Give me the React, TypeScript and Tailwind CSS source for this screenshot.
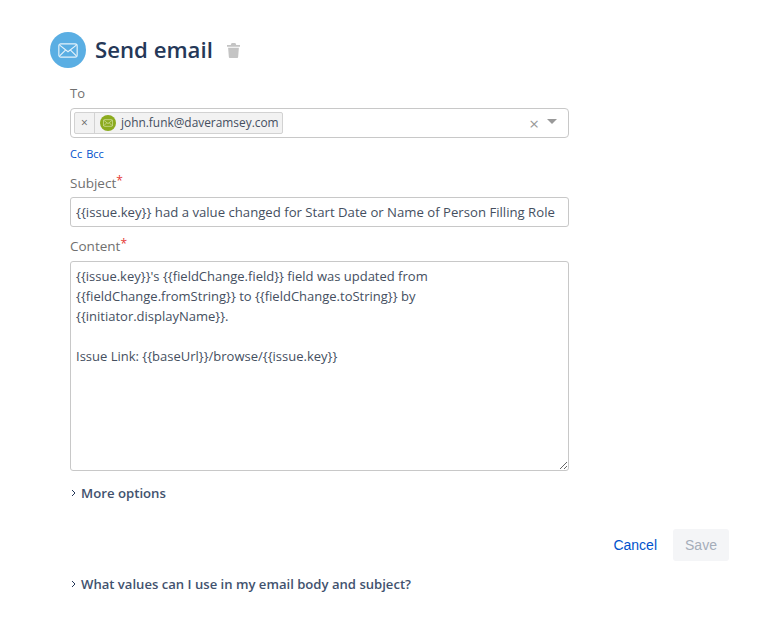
import React from 'react';

const font = "font-['Open_Sans','Noto_Sans',sans-serif]";

const MailIcon = ({ className }: { className?: string }) => (
  <svg viewBox="0 0 24 18" fill="none" stroke="currentColor" strokeWidth={1.4} className={className}>
    <rect x="1" y="1" width="22" height="16" rx="2.5" />
    <path d="M2 2.5l10 8 10-8M2 15.5l7-7M22 15.5l-7-7" />
  </svg>
);

const Chevron = () => (
  <svg viewBox="0 0 8 8" fill="none" stroke="#253858" strokeWidth={1} className="h-2 w-2">
    <path d="M2 1l3 3-3 3" />
  </svg>
);

const App: React.FC = () => {
  const body = `{{issue.key}}'s {{fieldChange.field}} field was updated from
{{fieldChange.fromString}} to {{fieldChange.toString}} by
{{initiator.displayName}}.

Issue Link: {{baseUrl}}/browse/{{issue.key}}`;

  return (
    <div className={`${font} h-[633px] w-[775px] bg-white pl-[50px] pt-8 text-[#454f5f]`}>
      {/* Title */}
      <div className="flex h-9 items-center">
        <div className="flex h-9 w-9 items-center justify-center rounded-full bg-[#5aaee3] text-[#e4f2fb]">
          <MailIcon className="h-[15px] w-5" />
        </div>
        <h1 className="ml-[9px] -mt-px text-[22.2px] font-semibold leading-9 text-[#253858]">Send email</h1>
        <svg viewBox="0 0 14 16" fill="#c4c4c4" className="ml-[14px] h-[15px] w-[13px]">
          <path d="M5 0h4l1 2h4v2H0V2h4zM1.2 5h11.6l-.8 10a1 1 0 01-1 1H3a1 1 0 01-1-1z" />
        </svg>
      </div>

      <div className="ml-5 w-[499px]">
        {/* To */}
        <label className="mt-4 block text-[13px] leading-[18px] text-[#707070]">To</label>
        <div className="mt-[6px] flex h-[30px] items-center rounded-[4px] border border-[#c8c8c8] pl-[3px] pr-[11px]">
          <div className="flex h-[22px] items-center rounded-[2px] border border-[#d2d2d2] bg-[#f2f2f2] text-[11.9px] text-[#454f5f]">
            <span className="flex h-full w-5 items-center justify-center border-r border-[#d2d2d2] text-[#666]">×</span>
            <span className="ml-[5px] flex h-4 w-4 items-center justify-center rounded-full bg-[#8cab1e] text-[#e6efc4]">
              <MailIcon className="h-2 w-[10px]" />
            </span>
            <span className="ml-[5px] pr-[3px]">john.funk@daveramsey.com</span>
          </div>
          <span className="ml-auto text-[17px] leading-none text-[#999]">×</span>
          <span className="ml-2 mb-1 h-0 w-0 border-x-[5px] border-t-[5px] border-x-transparent border-t-[#999]" />
        </div>
        <div className="mt-[9px] flex gap-1 text-[11px] leading-[14px] text-[#0052cc]">
          <span>Cc</span>
          <span>Bcc</span>
        </div>

        {/* Subject */}
        <label className="mt-[13px] block text-[13.5px] leading-[18px] text-[#707070]">
          Subject<span className="relative -top-[3px] text-[12px] leading-none text-[#e53935]">*</span>
        </label>
        <input
          readOnly
          value="{{issue.key}} had a value changed for Start Date or Name of Person Filling Role"
          className="mt-[5px] h-[30px] w-full rounded-[3px] border border-[#c8c8c8] px-[5px] text-[13.16px] text-[#454f5f] outline-none"
        />

        {/* Content */}
        <label className="mt-[10px] block text-[13.5px] leading-[18px] text-[#707070]">
          Content<span className="relative -top-[3px] text-[12px] leading-none text-[#e53935]">*</span>
        </label>
        <textarea
          readOnly
          value={body}
          className="mt-[6px] block h-[210px] w-full rounded-[3px] border border-[#c8c8c8] px-[5px] py-1 text-[13px] leading-[20px] text-[#454f5f] outline-none"
        />

        <div className="mt-[13px] flex items-center gap-[3px] text-[13.2px] font-semibold leading-[18px] text-[#42526e]">
          <Chevron />
          <span>More options</span>
        </div>
      </div>

      {/* Actions */}
      <div className="mt-[27px] flex w-[679px] items-center justify-end text-[14px] font-['Liberation_Sans',sans-serif]">
        <span className="text-[#0052cc]">Cancel</span>
        <span className="ml-4 flex h-8 w-14 items-center justify-center rounded-[3px] bg-[#f4f5f7] text-[#a5adba]">Save</span>
      </div>

      <div className="ml-5 mt-[14px] flex items-center gap-[3px] text-[13.1px] font-semibold leading-[18px] text-[#42526e]">
        <Chevron />
        <span>What values can I use in my email body and subject?</span>
      </div>
    </div>
  );
};

export default App;
